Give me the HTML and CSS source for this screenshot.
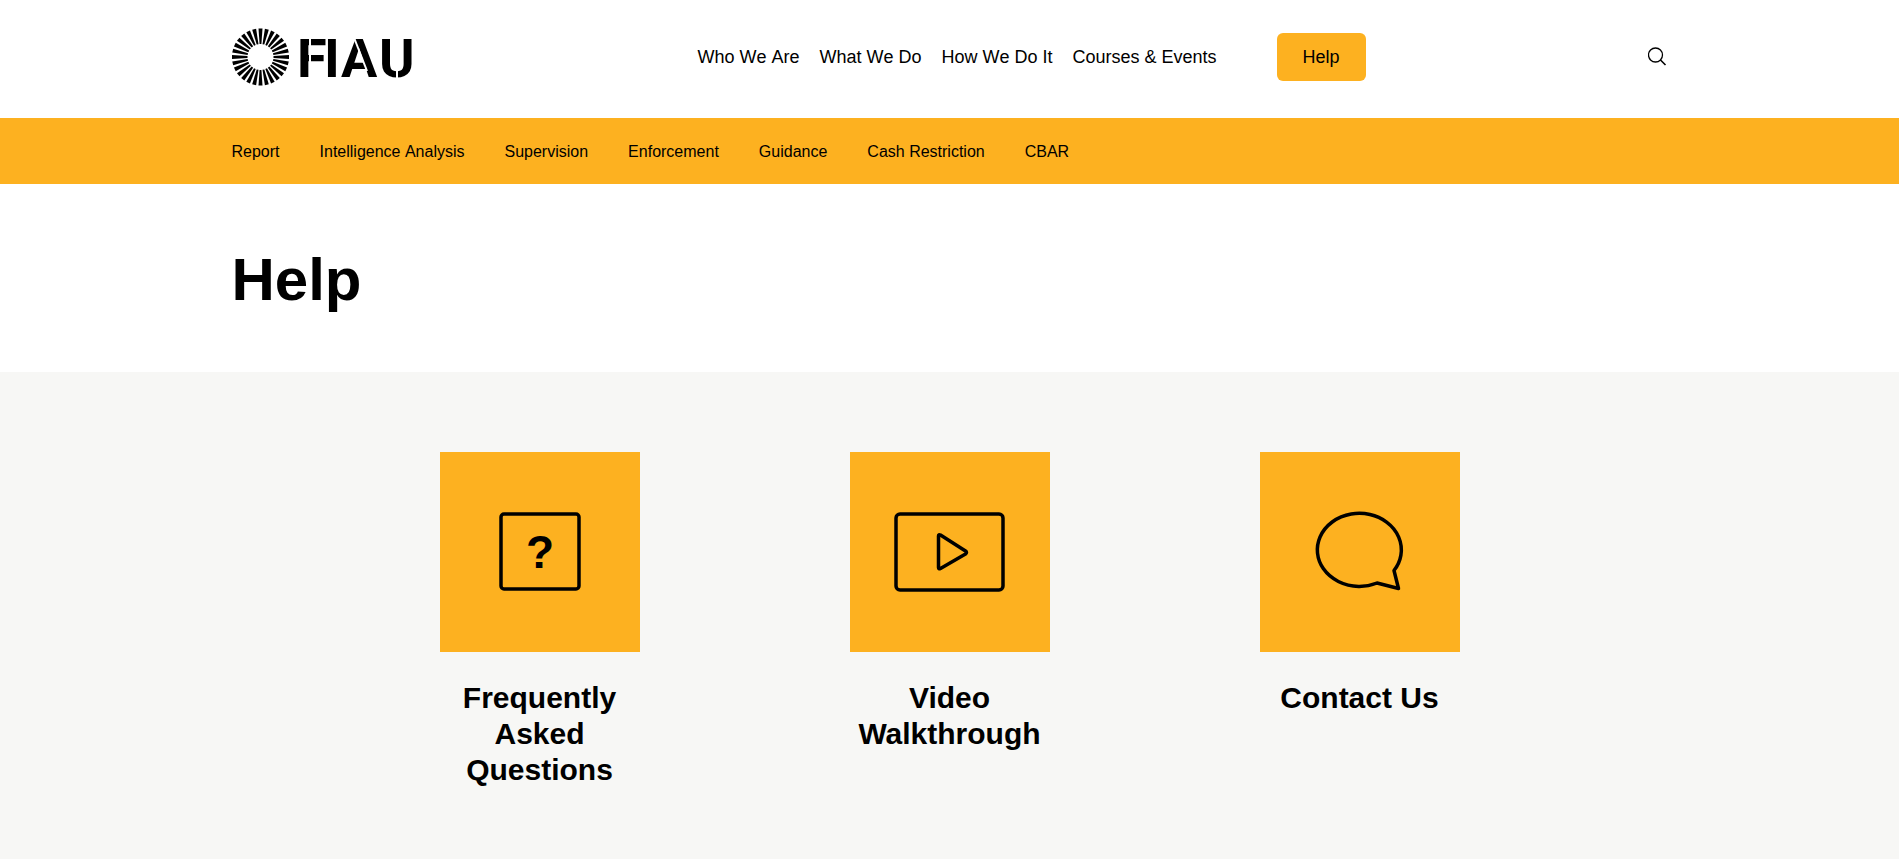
FILE: index.html
```html
<!DOCTYPE html>
<html lang="en">
<head>
  <meta charset="UTF-8" />
  <meta name="viewport" content="width=device-width, initial-scale=1.0"/>
  <title>Help - FIAU</title>
  <link rel="stylesheet" href="styles.css">
</head>
<body>
  <header class="header">
    <div class="container header-inner">
      <a href="#" class="logo">
        <svg width="184" height="58" viewBox="0 0 184 58">
          <!-- ring of tapered rays -->
          <g id="rays"></g>
          <text class="logo-text" x="65 92 109 147" y="49">FIAU</text>
          <!-- stencil cuts -->
          <g stroke="#fff" stroke-width="2">
            <path d="M78 8v42" />
            <path d="M121 7l14 36" />
            <path d="M165 40v11" />
          </g>
        </svg>
      </a>
      <nav class="main-nav">
        <a href="#">Who We Are</a>
        <a href="#">What We Do</a>
        <a href="#">How We Do It</a>
        <a href="#">Courses &amp; Events</a>
        <button type="button" class="help-btn">Help</button>
      </nav>
      <button type="button" class="search-btn" aria-label="Search">
        <svg width="20" height="20" viewBox="0 0 20 20" fill="none" stroke="#000">
          <circle cx="7.500" cy="8" r="7" stroke-width="1.300" />
          <path d="M12.500 13l5 5" stroke-width="1.600" />
        </svg>
      </button>
    </div>
  </header>

  <nav class="sub-nav">
    <div class="container sub-nav-inner">
      <a href="#">Report</a>
      <a href="#">Intelligence Analysis</a>
      <a href="#">Supervision</a>
      <a href="#">Enforcement</a>
      <a href="#">Guidance</a>
      <a href="#">Cash Restriction</a>
      <a href="#">CBAR</a>
    </div>
  </nav>

  <div class="page-title">
    <div class="container">
      <h1>Help</h1>
    </div>
  </div>

  <main class="help">
    <div class="help-grid">
      <a href="#" class="card">
        <svg class="card-icon" viewBox="0 0 200 200">
          <rect x="61" y="62" width="78" height="75" rx="3" />
          <text class="card-mark" x="100" y="116">?</text>
        </svg>
        <h2>Frequently Asked Questions</h2>
      </a>
      <a href="#" class="card">
        <svg class="card-icon" viewBox="0 0 200 200">
          <rect x="46" y="62" width="107" height="76" rx="4" />
          <path d="M88.500 84v31.500q0 2 2 1l25-14.500q2-1.500 0-3L90.500 83q-2-1-2 1z" />
        </svg>
        <h2>Video Walkthrough</h2>
      </a>
      <a href="#" class="card">
        <svg class="card-icon" viewBox="0 0 200 200">
          <path d="M134 118.500l4.500 18-21.500-5.500A42 36.500 0 1 1 134 118.500z" />
        </svg>
        <h2>Contact Us</h2>
      </a>
    </div>
  </main>

  <script>
    const rays = document.getElementById("rays");
    const count = 28;
    for (let i = 0; i < count; i++) {
      const ray = document.createElementNS("http://www.w3.org/2000/svg", "path");
      ray.setAttribute("d", "M-.9-13L-2-28.500H2L.9-13z");
      ray.setAttribute("transform", `translate(28.5 29) rotate(${i * 360 / count})`);
      rays.appendChild(ray);
    }
  </script>
</body>
</html>
```
FILE: styles.css
```css
* {
  box-sizing: border-box;
}
body {
  margin: 0;
  min-height: 100vh;
  display: flex;
  flex-direction: column;
  font-family: "Liberation Sans", Arial, sans-serif;
  color: #000;
  background: #fff;
}
a {
  color: inherit;
  text-decoration: none;
}
svg {
  display: block;
}
.container {
  width: 100%;
  max-width: 1476px;
  margin: 0 auto;
  padding: 0 20px;
}
.header {
  padding: 28px 0 32px;
}
.header-inner {
  display: flex;
  align-items: center;
  justify-content: space-between;
}
.logo svg {
  overflow: visible;
}
.logo-text {
  font-family: Roboto, sans-serif;
  font-size: 54px;
  font-weight: 700;
}
.main-nav {
  display: flex;
  align-items: center;
  gap: 20px;
  font-size: 18px;
  font-kerning: none;
}
.help-btn {
  height: 48px;
  margin-left: 40px;
  padding: 0 26px;
  border: none;
  border-radius: 6px;
  background: #fdb120;
  color: #000;
  font-family: inherit;
  font-size: 18px;
  cursor: pointer;
}
.search-btn {
  padding: 0;
  border: none;
  background: none;
  cursor: pointer;
}
.sub-nav {
  background: #fdb120;
  padding: 22px 0 20px;
}
.sub-nav-inner {
  display: flex;
  flex-wrap: wrap;
  gap: 0 40px;
  font-size: 16px;
  line-height: 24px;
  font-kerning: none;
}
.page-title {
  padding: 60px 0 56px;
}
.page-title h1 {
  margin: 0;
  font-size: 60px;
  line-height: 72px;
}
.help {
  flex: 1;
  padding: 80px 20px 60px;
  background: #f7f7f5;
}
.help-grid {
  display: grid;
  grid-template-columns: repeat(3, 1fr);
  justify-items: center;
  max-width: 1230px;
  margin: 0 auto;
}
.card {
  width: 200px;
  text-align: center;
}
.card-icon {
  width: 100%;
  background: #fdb120;
  fill: none;
  stroke: #000;
  stroke-width: 3.5;
  stroke-linejoin: round;
}
.card-mark {
  fill: #000;
  stroke: none;
  font-size: 46px;
  font-weight: 700;
  text-anchor: middle;
}
.card h2 {
  margin: 28px 0 0;
  font-size: 30px;
  line-height: 36px;
}
@media screen and (max-width: 900px) {
  .header-inner,
  .main-nav {
    flex-wrap: wrap;
  }
  .help-grid {
    grid-template-columns: 1fr;
    gap: 40px;
  }
}
```
